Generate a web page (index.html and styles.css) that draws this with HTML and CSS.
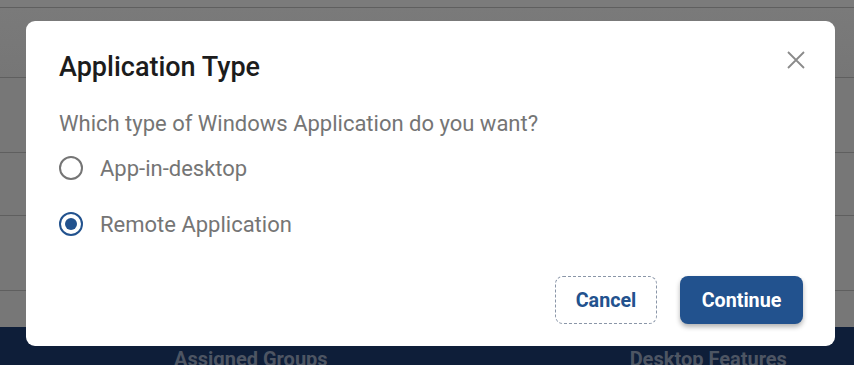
FILE: index.html
```html
<!DOCTYPE html>
<html lang="en">
<head>
<meta charset="utf-8">
<link rel="stylesheet" href="styles.css">
</head>
<body>
<div class="page">
  <div class="rows">
    <div class="row r0"></div>
    <div class="row r1"></div>
    <div class="row r2"></div>
    <div class="row r3"></div>
    <div class="row r4"></div>
    <div class="row r5"></div>
  </div>
  <div class="band">
    <span class="band-item">Assigned Groups</span>
    <span class="band-item">Desktop Features</span>
  </div>
</div>

<div class="overlay">
  <div class="modal" role="dialog">
    <div class="modal-head">
      <h2 class="title">Application Type</h2>
      <button class="close" aria-label="Close">
        <svg width="20" height="20" viewBox="0 0 20 20"><path d="M2 2 L18 18 M18 2 L2 18" stroke="#8a8a8a" stroke-width="1.8" fill="none"/></svg>
      </button>
    </div>
    <p class="question">Which type of Windows Application do you want?</p>
    <div class="options">
      <label class="option"><span class="radio"></span><span class="label">App-in-desktop</span></label>
      <label class="option"><span class="radio checked"></span><span class="label">Remote Application</span></label>
    </div>
    <div class="actions">
      <button class="btn btn-cancel">Cancel</button>
      <button class="btn btn-continue">Continue</button>
    </div>
  </div>
</div>
</body>
</html>
```
FILE: styles.css
```css
* { box-sizing: border-box; }
html, body { margin: 0; padding: 0; }
body {
  width: 854px;
  height: 365px;
  overflow: hidden;
  font-family: Roboto, "Noto Sans", Arial, sans-serif;
  position: relative;
  background: #777;
}
.page {
  display: flex;
  flex-direction: column;
  height: 365px;
}
.rows { display: flex; flex-direction: column; flex: 1; }
.row { border-bottom: 1px solid #5f5f5f; background: #777; }
.r0 { height: 8px; background: #7b7b7b; }
.r1 { height: 70px; background: linear-gradient(#7a7a7a, #767676); }
.r2 { height: 75px; }
.r3 { height: 63px; }
.r4 { height: 75px; }
.r5 { flex: 1; border-bottom: none; }
.band {
  height: 38px;
  background: #0e1e39;
  display: flex;
  align-items: flex-start;
  padding-left: 174px;
  padding-top: 20px;
  gap: 302px;
  font-size: 20px;
  font-weight: 700;
  color: #4d5563;
  line-height: 24px;
  overflow: hidden;
}
.band-item { white-space: nowrap; }

.overlay {
  position: absolute;
  inset: 0;
}
.modal {
  position: absolute;
  left: 26px;
  top: 21px;
  width: 809px;
  height: 325px;
  background: #fff;
  border-radius: 9px;
  padding: 30px 32px 22px 33px;
  display: flex;
  flex-direction: column;
}
.modal-head {
  display: flex;
  justify-content: space-between;
  align-items: flex-start;
}
.title {
  margin: 0;
  font-size: 27px;
  line-height: 32px;
  font-weight: 500;
  color: #1c1c1c;
}
.close {
  border: 0;
  background: none;
  padding: 0;
  margin: -1px -3px 0 0;
  width: 20px;
  height: 20px;
  cursor: pointer;
}
.close svg { display: block; }
.question {
  margin: 27px 0 0;
  font-size: 22px;
  line-height: 28px;
  color: #757575;
}
.options {
  display: flex;
  flex-direction: column;
  gap: 28px;
  margin-top: 16px;
}
.option {
  display: flex;
  align-items: center;
  gap: 17px;
  height: 28px;
  font-size: 22px;
  color: #757575;
}
.radio {
  width: 24px;
  height: 24px;
  border-radius: 50%;
  border: 2px solid #757575;
  display: flex;
  align-items: center;
  justify-content: center;
  flex: none;
}
.radio.checked { border-color: #22528e; }
.radio.checked::after {
  content: "";
  width: 12px;
  height: 12px;
  border-radius: 50%;
  background: #22528e;
}
.actions {
  margin-top: auto;
  display: flex;
  justify-content: flex-end;
  gap: 23px;
}
.btn {
  height: 48px;
  border-radius: 8px;
  font-family: Roboto, Arial, sans-serif;
  font-size: 19.7px;
  font-weight: 700;
  cursor: pointer;
  padding: 0;
}
.btn-cancel {
  width: 102px;
  background: #fff;
  color: #22528e;
  border: 1px dashed #8a96a8;
}
.btn-continue {
  width: 123px;
  background: #22528e;
  color: #fff;
  border: 0;
  box-shadow: 0 3px 5px rgba(0,0,0,0.3);
}
```
